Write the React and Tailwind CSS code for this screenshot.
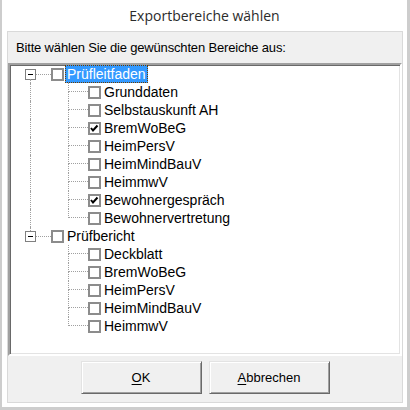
import React from 'react';

const tree = [
  {
    label: 'Prüfleitfaden',
    selected: true,
    children: [
      { label: 'Grunddaten' },
      { label: 'Selbstauskunft AH' },
      { label: 'BremWoBeG', checked: true },
      { label: 'HeimPersV' },
      { label: 'HeimMindBauV' },
      { label: 'HeimmwV' },
      { label: 'Bewohnergespräch', checked: true },
      { label: 'Bewohnervertretung' },
    ],
  },
  {
    label: 'Prüfbericht',
    children: [
      { label: 'Deckblatt' },
      { label: 'BremWoBeG' },
      { label: 'HeimPersV' },
      { label: 'HeimMindBauV' },
      { label: 'HeimmwV' },
    ],
  },
];

const dot = 'border-dotted border-[#a0a0a0]';

function Check({ checked }) {
  return (
    <div className="w-[13px] h-[13px] shrink-0 border-2 border-[#8c8c8c] bg-white flex items-center justify-center">
      {checked ? (
        <svg width="9" height="9" viewBox="0 0 9 9">
          <path d="M1 4 L3 6.5 L7.5 1.5" stroke="#000" strokeWidth="2" fill="none" />
        </svg>
      ) : null}
    </div>
  );
}

function TopRow({ node, first, last }) {
  return (
    <div className="h-[18px] flex items-center">
      <div className="w-[15px] shrink-0" />
      <div className="relative w-[11px] h-full shrink-0 flex items-center">
        <div className={`absolute left-[5px] top-0 h-[4px] ${first ? '' : `border-l ${dot}`}`} />
        <div className={`absolute left-[5px] bottom-0 h-[4px] ${last ? '' : `border-l ${dot}`}`} />
        <div className="w-[11px] h-[11px] border border-[#808080] bg-white flex items-center justify-center">
          <div className="w-[5px] h-px bg-black" />
        </div>
      </div>
      <div className={`w-[15px] shrink-0 border-t ${dot}`} />
      <Check />
      <div
        className={`ml-[1px] h-[18px] px-[1px] flex items-center leading-none ${
          node.selected ? 'bg-[#3399ff] text-white border border-dotted border-[#6b3d00]' : 'border border-transparent'
        }`}
      >
        {node.label}
      </div>
    </div>
  );
}

function ChildRow({ node, parentLast, last }) {
  return (
    <div className="h-[18px] flex items-center">
      <div className="w-[20px] shrink-0" />
      <div className={`w-[38px] h-full shrink-0 ${parentLast ? '' : `border-l ${dot}`}`} />
      <div className="w-[20px] h-full shrink-0 flex flex-col">
        <div className={`h-[9px] border-l border-b ${dot}`} />
        <div className={`flex-1 ${last ? '' : `border-l ${dot}`}`} />
      </div>
      <Check checked={node.checked} />
      <div className="ml-[3px] leading-none">{node.label}</div>
    </div>
  );
}

function Button({ children }) {
  return (
    <button className="w-[121px] h-[33px] bg-[#f0f0f0] border border-t-[#e3e3e3] border-l-[#e3e3e3] border-r-[#696969] border-b-[#696969] shadow-[inset_1px_1px_0_#ffffff,inset_-1px_-1px_0_#a0a0a0] text-[13px] text-black">
      {children}
    </button>
  );
}

export default function App() {
  return (
    <div className="w-[410px] h-[410px] bg-white border-l-2 border-r-[3px] border-b-[3px] border-[#cdcdcd] flex flex-col font-['Liberation_Sans',Arial,sans-serif] text-black">
      <div className="h-[31px] shrink-0 flex items-center justify-center text-[14px] text-[#2b2b2b] font-['Open_Sans',sans-serif]">
        Exportbereiche wählen
      </div>
      <div className="ml-[5px] mr-[4px] h-[372px] bg-[#f0f0f0] border border-[#d9d9d9] flex flex-col">
        <div className="h-[31px] shrink-0 pl-[8px] flex items-center text-[13px] tracking-[-0.17px]">
          Bitte wählen Sie die gewünschten Bereiche aus:
        </div>
        <div className="h-[293px] shrink-0 bg-white border-2 border-t-[#a0a0a0] border-l-[#a0a0a0] border-r-white border-b-white shadow-[inset_1px_1px_0_#696969,inset_-1px_-1px_0_#e3e3e3] text-[14px]">
          {tree.map((node, i) => (
            <div key={node.label}>
              <TopRow node={node} first={i === 0} last={i === tree.length - 1} />
              {node.children.map((c, j) => (
                <ChildRow
                  key={c.label + j}
                  node={c}
                  parentLast={i === tree.length - 1}
                  last={j === node.children.length - 1}
                />
              ))}
            </div>
          ))}
        </div>
        <div className="mt-[5px] flex justify-center gap-[7px]">
          <Button>
            <u className="underline-offset-2">O</u>K
          </Button>
          <Button>
            <u className="underline-offset-2">A</u>bbrechen
          </Button>
        </div>
      </div>
    </div>
  );
}
